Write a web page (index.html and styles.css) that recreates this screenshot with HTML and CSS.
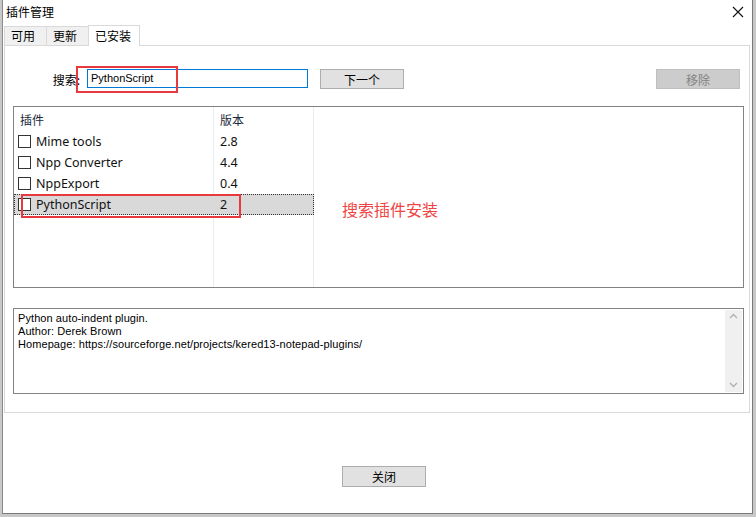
FILE: index.html
```html
<!DOCTYPE html>
<html lang="zh">
<head>
<meta charset="utf-8">
<title>插件管理</title>
<link rel="stylesheet" href="styles.css">
</head>
<body>
<div class="window">
  <div class="titlebar">
    <span class="title">插件管理</span>
    <svg class="close" width="12" height="12" viewBox="0 0 12 12"><path d="M1 1L11 11M11 1L1 11" stroke="#111" stroke-width="1.1"/></svg>
  </div>
  <div class="tabs">
    <div class="tab">可用</div>
    <div class="tab">更新</div>
    <div class="tab active">已安装</div>
  </div>
  <div class="panel">
    <div class="search-row">
      <label class="search-label">搜索:</label>
      <div class="input">PythonScript</div>
      <button class="btn next">下一个</button>
      <div class="spacer"></div>
      <button class="btn disabled">移除</button>
    </div>
    <div class="list">
      <div class="list-inner">
        <div class="row header"><span class="c1">插件</span><span class="c2">版本</span></div>
        <div class="row"><span class="c1"><i class="cb"></i>Mime tools</span><span class="c2">2.8</span></div>
        <div class="row"><span class="c1"><i class="cb"></i>Npp Converter</span><span class="c2">4.4</span></div>
        <div class="row"><span class="c1"><i class="cb"></i>NppExport</span><span class="c2">0.4</span></div>
        <div class="row selected"><span class="c1"><i class="cb"></i>PythonScript</span><span class="c2">2</span></div>
      </div>
    </div>
    <div class="desc">
      <div class="desc-text">Python auto-indent plugin.<br>Author: Derek Brown<br>Homepage: https://sourceforge.net/projects/kered13-notepad-plugins/</div>
      <div class="scrollbar">
        <svg width="17" height="12" viewBox="0 0 17 12"><path d="M5 7L8.5 3.5L12 7" fill="none" stroke="#b0b0b0" stroke-width="1.3"/></svg>
        <svg width="17" height="12" viewBox="0 0 17 12"><path d="M5 4L8.5 7.5L12 4" fill="none" stroke="#b0b0b0" stroke-width="1.3"/></svg>
      </div>
    </div>
  </div>
  <div class="footer">
    <button class="btn close-btn">关闭</button>
  </div>
  <div class="mark mark-input"></div>
  <div class="mark mark-row"></div>
  <div class="note">搜索插件安装</div>
</div>
</body>
</html>
```
FILE: styles.css
```css
html, body {
  margin: 0;
  padding: 0;
}
body {
  width: 756px;
  height: 517px;
  background: #c8c8c8;
  font-family: "Noto Sans CJK SC", "Noto Sans", sans-serif;
  font-size: 12px;
  color: #000;
  overflow: hidden;
}
.window {
  position: relative;
  margin-left: 2px;
  width: 749px;
  height: 513px;
  background: #fff;
  border-left: 1px solid #8a8a8a;
  border-right: 1px solid #7a7a7a;
  border-bottom: 1px solid #7a7a7a;
  display: flex;
  flex-direction: column;
}
.titlebar {
  height: 26px;
  display: flex;
  align-items: center;
  padding-left: 3px;
  padding-right: 8px;
}
.title {
  flex: 1;
  font-size: 12px;
  margin-top: -3px;
}
.close {
  margin-top: -3px;
}
.tabs {
  display: flex;
  padding-left: 1px;
  height: 19px;
  align-items: flex-end;
  position: relative;
  z-index: 1;
}
.tab {
  height: 18px;
  line-height: 18px;
  padding: 0 6px;
  width: 29px;
  background: #f0f0f0;
  border: 1px solid #d9d9d9;
  border-bottom: none;
  margin-right: -1px;
  font-size: 12px;
  text-align: left;
}
.tab.active {
  background: #fff;
  height: 20px;
  width: 38px;
  line-height: 19px;
  padding: 0 6px;
  border-color: #d9d9d9;
  margin-bottom: -1px;
}
.panel {
  margin-left: 1px;
  width: 746px;
  height: 368px;
  border: 1px solid #d9d9d9;
  box-sizing: border-box;
  display: flex;
  flex-direction: column;
  padding: 0 0 0 8px;
}
.search-row {
  display: flex;
  align-items: center;
  height: 20px;
  margin-top: 23px;
}
.search-label {
  width: 74px;
  text-align: right;
  font-size: 12px;
  padding-right: 7px;
  box-sizing: border-box;
}
.input {
  width: 221px;
  height: 19px;
  box-sizing: border-box;
  border: 1px solid #0078d7;
  font-family: "Liberation Sans", "Noto Sans", sans-serif;
  font-size: 11px;
  line-height: 17px;
  padding-left: 3px;
  margin-top: -1px;
}
.btn {
  font-family: "Noto Sans CJK SC", sans-serif;
  font-size: 12px;
  background: #e1e1e1;
  border: 1px solid #adadad;
  height: 20px;
  width: 84px;
  padding: 0;
  line-height: 17px;
  color: #000;
}
.next {
  margin-left: 12px;
}
.spacer {
  flex: 1;
}
.disabled {
  background: #cccccc;
  border-color: #bfbfbf;
  color: #838383;
  margin-right: 9px;
}
.list {
  margin-top: 17px;
  width: 731px;
  height: 182px;
  box-sizing: border-box;
  border: 1px solid #828282;
}
.list-inner {
  height: 100%;
  background-image: linear-gradient(to right,
    transparent 199px, #e8edf3 199px, #e8edf3 200px, transparent 200px,
    transparent 299px, #e8edf3 299px, #e8edf3 300px, transparent 300px);
}
.row {
  display: grid;
  grid-template-columns: 199px 100px;
  height: 21px;
  align-items: center;
  font-family: "Noto Sans", "Noto Sans CJK SC", sans-serif;
  font-size: 12.5px;
  color: #111;
  box-sizing: border-box;
  width: 300px;
}
.row.header {
  height: 24px;
  font-family: "Noto Sans CJK SC", sans-serif;
  font-size: 12px;
  color: #1a2a3a;
}
.header .c1 {
  padding-left: 6px;
}
.c1 {
  display: flex;
  align-items: center;
  padding-left: 4px;
}
.c2 {
  padding-left: 7px;
}
.cb {
  display: inline-block;
  width: 13px;
  height: 13px;
  box-sizing: border-box;
  border: 1px solid #333;
  background: #fff;
  margin-right: 5px;
}
.row.selected {
  background: #d9d9d9;
  outline: 1px dotted #333;
  outline-offset: -1px;
}
.desc {
  margin-top: 20px;
  width: 731px;
  height: 86px;
  box-sizing: border-box;
  border: 1px solid #828282;
  display: flex;
  padding: 1px;
}
.desc-text {
  flex: 1;
  font-family: "Liberation Sans", sans-serif;
  font-size: 11px;
  letter-spacing: 0.08px;
  line-height: 13px;
  padding: 2px 3px;
  color: #000;
}
.scrollbar {
  width: 17px;
  background: #f0f0f0;
  display: flex;
  flex-direction: column;
  justify-content: space-between;
  padding: 1px 0;
}
.footer {
  flex: 1;
  display: flex;
  justify-content: center;
  align-items: flex-start;
  padding-top: 53px;
  padding-left: 13px;
}
.close-btn {
  width: 84px;
  height: 21px;
  line-height: 19px;
}
.mark {
  position: absolute;
  border: 2px solid #e8393f;
  box-sizing: border-box;
}
.mark-input {
  left: 73px;
  top: 66px;
  width: 102px;
  height: 27px;
}
.mark-row {
  left: 18px;
  top: 194px;
  width: 220px;
  height: 24px;
}
.note {
  position: absolute;
  left: 339px;
  top: 197px;
  font-size: 16px;
  color: #ef4444;
  letter-spacing: 0;
}
```
